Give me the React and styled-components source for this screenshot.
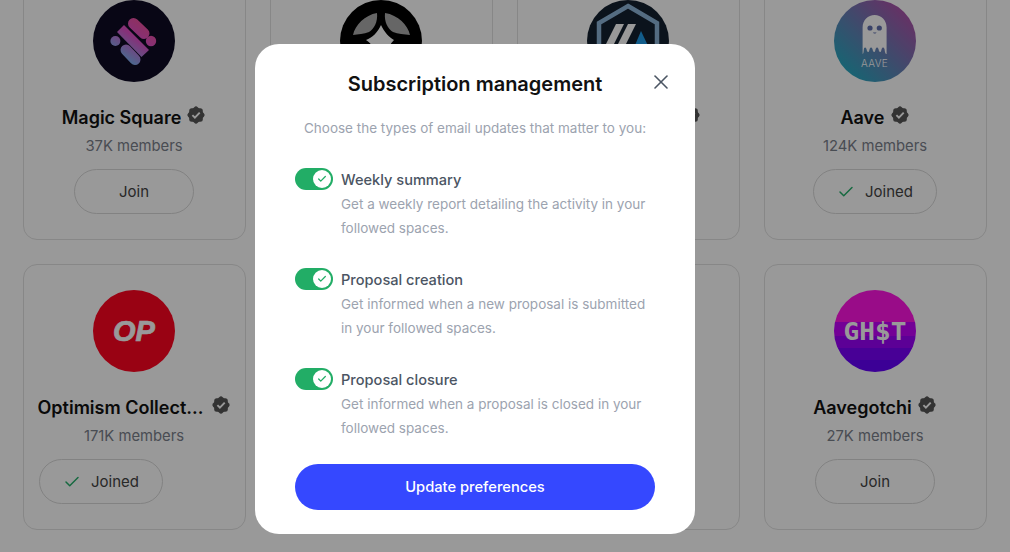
import React from "react";
import styled, { createGlobalStyle } from "styled-components";
import { X, Check } from "lucide-react";

const GlobalStyle = createGlobalStyle`
  html, body {
    margin: 0;
    height: 100%;
    overflow: hidden;
    background: #fff;
    font-family: Inter, "Liberation Sans", sans-serif;
  }
`;

const Page = styled.div`
  height: 552px;
  overflow: hidden;
`;

const Grid = styled.div`
  display: grid;
  grid-template-columns: repeat(4, 223px);
  column-gap: 24px;
  row-gap: 24px;
  margin: -26px 0 0 23px;
`;

const Card = styled.div`
  box-sizing: border-box;
  height: 266px;
  padding: 25px 16px 26px 15px;
  border: 1px solid #e1e1e1;
  border-radius: 14px;
  display: flex;
  flex-direction: column;
  align-items: center;
`;

const Avatar = styled.div`
  width: 82px;
  height: 82px;
  flex: none;
  border-radius: 50%;
  overflow: hidden;
  background: ${(p) => p.$bg};
  margin-bottom: 21px;

  svg {
    display: block;
  }
`;

const NameRow = styled.div`
  display: flex;
  align-items: flex-start;
  gap: 5px;
  height: 30px;
`;

const Name = styled.div`
  max-width: 168px;
  font-size: 18px;
  line-height: 30px;
  font-weight: 600;
  color: #111;
  white-space: nowrap;
  overflow: hidden;
  text-overflow: ellipsis;
`;

const BadgeIcon = styled.svg`
  width: 20px;
  height: 20px;
  flex: none;
  margin-top: 2px;
`;

const Members = styled.div`
  margin-top: 1px;
  font-size: 14.8px;
  line-height: 24px;
  color: #7b808b;
`;

const JoinButton = styled.button`
  box-sizing: border-box;
  align-self: ${(p) => (p.$start ? "flex-start" : "center")};
  width: ${(p) => (p.$joined ? "124px" : "120px")};
  height: 45px;
  margin-top: 11px;
  flex: none;
  display: flex;
  align-items: center;
  justify-content: center;
  gap: 10px;
  background: none;
  border: 1px solid #d9d9d9;
  border-radius: 23px;
  font-family: inherit;
  font-size: 15px;
  color: #444;

  svg {
    color: #25b06b;
  }
`;

const Overlay = styled.div`
  position: fixed;
  inset: 0;
  background: rgba(0, 0, 0, 0.4);
`;

const Modal = styled.div`
  position: absolute;
  left: 255px;
  top: 44px;
  box-sizing: border-box;
  width: 440px;
  height: 490px;
  padding: 24px 40px;
  background: #fff;
  border-radius: 24px;
  display: flex;
  flex-direction: column;
`;

const Title = styled.h2`
  margin: 0;
  font-size: 20px;
  line-height: 32px;
  font-weight: 600;
  text-align: center;
  color: #111;
`;

const CloseButton = styled.button`
  position: absolute;
  top: 26px;
  right: 22px;
  width: 24px;
  height: 24px;
  padding: 0;
  border: 0;
  background: none;
  color: #4b5563;
`;

const Intro = styled.p`
  margin: 18px 0 30px;
  font-size: 13.5px;
  line-height: 20px;
  white-space: nowrap;
  text-align: center;
  color: #9ca3af;
`;

const OptionList = styled.div`
  display: flex;
  flex-direction: column;
  gap: 4px;
  flex: 1;
`;

const Option = styled.div`
  display: flex;
  gap: 8px;
  height: 96px;
`;

const Toggle = styled.div`
  box-sizing: border-box;
  width: 38px;
  height: 22px;
  flex: none;
  padding: 2px;
  border-radius: 11px;
  background: #22ad66;
  display: flex;
  justify-content: flex-end;
`;

const Thumb = styled.span`
  width: 18px;
  height: 18px;
  border-radius: 50%;
  background: #fff;
  color: #22ad66;
  display: flex;
  align-items: center;
  justify-content: center;
`;

const OptionBody = styled.div`
  display: flex;
  flex-direction: column;
  padding-top: 1px;
`;

const OptionLabel = styled.div`
  font-size: 14.6px;
  line-height: 22px;
  font-weight: 500;
  color: #4b5563;
`;

const OptionText = styled.div`
  margin-top: 1px;
  font-size: 13.5px;
  line-height: 24px;
  color: #9ca3af;
`;

const SubmitButton = styled.button`
  height: 46px;
  flex: none;
  border: 0;
  border-radius: 23px;
  background: #3548ff;
  color: #fff;
  font-family: inherit;
  font-size: 14.7px;
  font-weight: 500;
`;

const Badge = () => (
  <BadgeIcon viewBox="0 0 20 20">
    <rect x="3.2" y="3.2" width="13.6" height="13.6" rx="2.5" fill="#565656" />
    <rect x="3.2" y="3.2" width="13.6" height="13.6" rx="2.5" fill="#565656" transform="rotate(45 10 10)" />
    <path d="M6.4 10.2l2.5 2.5 4.8-5" fill="none" stroke="#fff" strokeWidth="1.9" />
  </BadgeIcon>
);

const MagicSquareLogo = () => (
  <svg width="82" height="82" viewBox="0 0 82 82">
    <defs>
      <linearGradient id="ms" gradientUnits="userSpaceOnUse" x1="58" y1="20" x2="28" y2="62">
        <stop offset="0" stopColor="#f2528f" />
        <stop offset="0.45" stopColor="#e050c8" />
        <stop offset="1" stopColor="#6cc0f5" />
      </linearGradient>
    </defs>
    <path d="M40.5 23.5L51 33.5" stroke="url(#ms)" strokeWidth="11" strokeLinecap="round" />
    <circle cx="58" cy="41" r="5.2" fill="url(#ms)" />
    <path d="M31 25L56 50 48.5 57 24 32z" fill="url(#ms)" />
    <circle cx="22.4" cy="41" r="5" fill="url(#ms)" />
    <path d="M33 50L42 59.5" stroke="url(#ms)" strokeWidth="11" strokeLinecap="round" />
  </svg>
);

const ArbitrumLogo = () => (
  <svg width="82" height="82" viewBox="0 0 82 82">
    <path d="M41 6L70 23V58L41 75 12 58V23z" fill="none" stroke="#8cb4d8" strokeWidth="4.5" />
    <path d="M29 24H37L26 46H18zM41 24H49L38 46H30z" fill="#fff" />
    <path d="M54 31L63 50H46z" fill="#1f9be8" />
  </svg>
);

const StarLogo = () => (
  <svg width="82" height="82" viewBox="0 0 82 82">
    <path d="M13 35C15 25 25 15 37 13 38 22 34 29 29 32 24 34 18 34 13 35z" fill="#aaa" />
    <path d="M70 35C68 25 58 15 45 13 44 22 48 29 53 32 58 34 64 34 70 35z" fill="#aaa" />
    <path d="M41 25C44 32 50 38 54 40 50 44 48 48 48 52H34C34 48 32 44 26 40 32 38 38 32 41 25z" fill="#fff" />
  </svg>
);

const AaveLogo = () => (
  <svg width="82" height="82" viewBox="0 0 82 82">
    <path
      d="M28.6 54V27.5C28.6 20 34 15 40.6 15S52.6 20 52.6 27.5V54C51.5 54 51 53 50.5 49 49.5 47 48.5 47 47.5 49.5 47 53 45 53 44.5 49 43.5 47 42.5 47 41.5 49.5 41 53 39 53 38.5 49 37.5 47 36.5 47 35.5 49.5 35 53 33 53 32.5 49 31.5 47 30 47 29.8 50 29.6 53 29 54 28.6 54z"
      fill="#fff"
    />
    <circle cx="36" cy="28" r="2.6" fill="#5f6fae" />
    <circle cx="45.3" cy="28" r="2.6" fill="#5f6fae" />
    <path d="M39 32.5h3.5c-.4 1.4-3.1 1.4-3.5 0z" fill="#5f6fae" />
    <text x="40.6" y="66.5" textAnchor="middle" fontFamily="Inter, sans-serif" fontWeight="300" fontSize="10" fill="#fff" letterSpacing="0.4">
      AAVE
    </text>
  </svg>
);

const OpLogo = () => (
  <svg width="82" height="82" viewBox="0 0 82 82">
    <text x="41" y="51" textAnchor="middle" fontFamily="'Liberation Sans', sans-serif" fontWeight="700" fontStyle="italic" fontSize="29" fill="#fff" stroke="#fff" strokeWidth="0.7">
      OP
    </text>
  </svg>
);

const GhstLogo = () => (
  <svg width="82" height="82" viewBox="0 0 82 82">
    <text x="41" y="50" textAnchor="middle" fontFamily="'DejaVu Sans Mono', monospace" fontWeight="700" fontSize="25" textLength="63" lengthAdjust="spacingAndGlyphs" fill="#fff">
      GH$T
    </text>
  </svg>
);

const ghstStripes =
  "linear-gradient(#ff14e3 0 32px, #c000fa 32px 46px, #9a00fa 46px 58px, #7800fa 58px 70px, #6400fa 70px)";

const spaces = [
  { name: "Magic Square", members: "37K", bg: "#0e0a24", logo: <MagicSquareLogo /> },
  { bg: "#000", logo: <StarLogo /> },
  { name: "Arbitrum DAO", bg: "#13202f", logo: <ArbitrumLogo /> },
  {
    name: "Aave",
    members: "124K",
    joined: true,
    bg: "linear-gradient(45deg, #2ba5bf 15%, #b04fa8 90%)",
    logo: <AaveLogo />,
  },
  { name: "Optimism Collective", members: "171K", joined: true, start: true, bg: "#ff0420", logo: <OpLogo /> },
  {},
  {},
  { name: "Aavegotchi", members: "27K", bg: ghstStripes, logo: <GhstLogo /> },
];

const options = [
  {
    label: "Weekly summary",
    text: "Get a weekly report detailing the activity in your followed spaces.",
  },
  {
    label: "Proposal creation",
    text: "Get informed when a new proposal is submitted in your followed spaces.",
  },
  {
    label: "Proposal closure",
    text: "Get informed when a proposal is closed in your followed spaces.",
  },
];

export default function App() {
  return (
    <Page>
      <GlobalStyle />
      <Grid>
        {spaces.map((space, i) => (
          <Card key={i}>
            {space.logo && <Avatar $bg={space.bg}>{space.logo}</Avatar>}
            {space.name && (
              <NameRow>
                <Name>{space.name}</Name>
                <Badge />
              </NameRow>
            )}
            {space.members && <Members>{space.members} members</Members>}
            {space.members && (
              <JoinButton $joined={space.joined} $start={space.start}>
                {space.joined && <Check size={18} strokeWidth={2} />}
                {space.joined ? "Joined" : "Join"}
              </JoinButton>
            )}
          </Card>
        ))}
      </Grid>
      <Overlay>
        <Modal>
          <Title>Subscription management</Title>
          <CloseButton>
            <X size={24} strokeWidth={1.6} />
          </CloseButton>
          <Intro>Choose the types of email updates that matter to you:</Intro>
          <OptionList>
            {options.map((option) => (
              <Option key={option.label}>
                <Toggle>
                  <Thumb>
                    <Check size={10} strokeWidth={3} />
                  </Thumb>
                </Toggle>
                <OptionBody>
                  <OptionLabel>{option.label}</OptionLabel>
                  <OptionText>{option.text}</OptionText>
                </OptionBody>
              </Option>
            ))}
          </OptionList>
          <SubmitButton>Update preferences</SubmitButton>
        </Modal>
      </Overlay>
    </Page>
  );
}
